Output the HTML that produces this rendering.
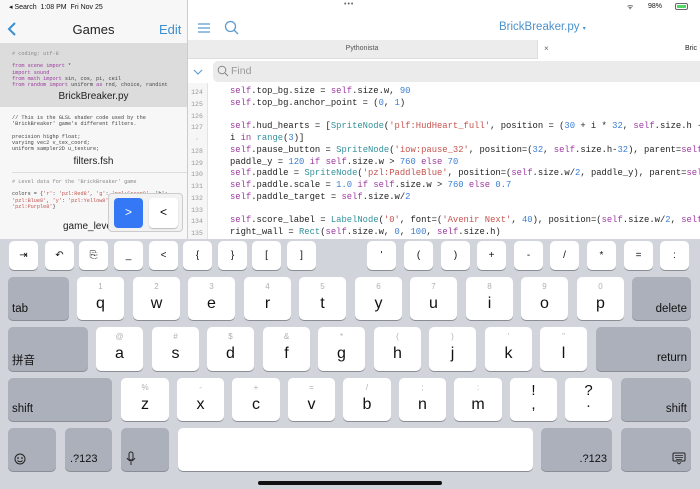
<!DOCTYPE html>
<html><head><meta charset="utf-8"><style>
*{margin:0;padding:0;box-sizing:border-box}
body{width:700px;height:489px;overflow:hidden;background:#fff;font-family:"Liberation Sans",sans-serif;position:relative}
.a{position:absolute}
.sm{font-family:"Liberation Mono",monospace;font-size:5.2px;line-height:6.2px;color:#444;white-space:pre}
.code{font-family:"Liberation Mono",monospace;font-size:8.85px;white-space:pre;color:#222}
.s{color:#9c3aa0}.st{color:#c4544f}.c{color:#33919a}.n{color:#3d7fd3}.k{color:#9c3aa0}
.ln{font-family:"Liberation Mono",monospace;font-size:6.5px;color:#999;width:18px;text-align:center}
.kb{position:absolute;background:#fff;border-radius:5px;box-shadow:0 1px 0 #8a8d93;text-align:center;color:#111}
.g{background:#abb0bb}
.t{height:29px;width:29px;top:241px;font-size:10px;line-height:29px}
.r{height:43px;font-size:16px}
.r span.l{position:absolute;left:0;right:0;top:17px;height:20px;line-height:20px}
.r span.u{position:absolute;left:0;right:0;top:5px;height:10px;line-height:10px;font-size:8px;color:#b0b0b0}
.lab{position:absolute;font-size:11.5px;color:#111}
</style></head><body>
<!-- left pane -->
<div class="a" style="left:0;top:0;width:187px;height:240px;background:#f7f7f7"></div>
<div class="a" style="left:187px;top:0;width:1px;height:240px;background:#ccc"></div>
<!-- status bar -->
<div class="a" style="left:0;top:0;width:700px;height:14px;font-size:7px;color:#111;">
<span class="a" style="left:9px;top:3px;white-space:nowrap">◂ Search&nbsp;&nbsp;1:08 PM&nbsp;&nbsp;Fri Nov 25</span>
<span class="a" style="left:344px;top:1px;color:#666;letter-spacing:1px">•••</span>
<span class="a" style="left:627px;top:3px">ᯤ</span>
<span class="a" style="left:648px;top:3px">98%</span>
<span class="a" style="left:675px;top:3px;width:13px;height:7px;border:1px solid #666;border-radius:2px"><span class="a" style="left:1px;top:1px;width:9px;height:3px;background:#4cd964"></span></span>
</div>
<svg class="a" style="left:6px;top:21px" width="12" height="16"><path d="M9 2 L3 8 L9 14" stroke="#3a8fd0" stroke-width="2" fill="none"/></svg>
<div class="a" style="left:0;width:187px;top:22px;text-align:center;font-size:13px;color:#222">Games</div>
<div class="a" style="left:159px;top:22px;font-size:13px;color:#3a8fd0">Edit</div>
<div class="a" style="left:0;top:43px;width:187px;height:64px;background:#dcdcdc"></div>
<div class="a sm" style="left:12px;top:51px"><span style="color:#888"># coding: utf-8</span>

<span class="k">from scene import</span> *
<span class="k">import sound</span>
<span class="k">from math import</span> sin, cos, pi, ceil
<span class="k">from random import</span> uniform <span class="k">as</span> rnd, choice, randint</div>
<div class="a" style="left:0;width:187px;top:91px;text-align:center;font-size:10px;color:#222">BrickBreaker.py</div>
<div class="a sm" style="left:12px;top:115px">// This is the GLSL shader code used by the
'BrickBreaker' game's different filters.

precision highp float;
varying vec2 v_tex_coord;
uniform sampler2D u_texture;</div>
<div class="a" style="left:0;width:187px;top:156px;text-align:center;font-size:10px;color:#222">filters.fsh</div>
<div class="a" style="left:12px;top:172px;width:175px;height:1px;background:#ddd"></div>
<div class="a sm" style="left:12px;top:179px"><span style="color:#888"># Level data for the 'BrickBreaker' game</span>

colors = {<span class="st">'r'</span>: <span class="st">'pzl:Red8'</span>, <span class="st">'g'</span>: <span class="st">'pzl:Green8'</span>, 'b':
<span class="st">'pzl:Blue8'</span>, <span class="st">'y'</span>: <span class="st">'pzl:Yellow8'</span>
<span class="st">'pzl:Purple8'</span>}</div>
<div class="a" style="left:63px;top:221px;font-size:10px;color:#222">game_level</div>
<div class="a" style="left:108px;top:193px;width:75px;height:39px;background:#f2f2f2;border:1px solid #ccc;border-radius:4px"></div>
<div class="a" style="left:114px;top:198px;width:29px;height:30px;background:#3478f6;border-radius:4px;color:#fff;text-align:center;line-height:29px;font-size:12px">&gt;</div>
<div class="a" style="left:149px;top:198px;width:29px;height:30px;background:#fff;border-radius:4px;box-shadow:0 1px 1px #bbb;text-align:center;line-height:29px;font-size:12px">&lt;</div>
<!-- right pane -->
<svg class="a" style="left:197px;top:22px" width="14" height="12"><path d="M1 2H13M1 6H13M1 10H13" stroke="#5b9bd0" stroke-width="1.2"/></svg>
<svg class="a" style="left:224px;top:20px" width="16" height="16"><circle cx="6.5" cy="6.5" r="5" stroke="#5b9bd0" stroke-width="1.3" fill="none"/><path d="M10 10L14 14" stroke="#5b9bd0" stroke-width="1.3"/></svg>
<div class="a" style="left:499px;top:21px;font-size:11.5px;color:#4b92cc">BrickBreaker.py <span style="font-size:6px">▾</span></div>
<div class="a" style="left:188px;top:40px;width:512px;height:19px;background:#ececec;border-bottom:1px solid #ddd"></div>
<div class="a" style="left:188px;top:45px;width:348px;text-align:center;font-size:7px;color:#555">Pythonista</div>
<div class="a" style="left:537px;top:40px;width:163px;height:19px;background:#fff;border-left:1px solid #ddd"></div>
<div class="a" style="left:544px;top:44px;font-size:8px;color:#666">×</div>
<div class="a" style="left:685px;top:45px;font-size:7px;color:#222">Bric</div>
<svg class="a" style="left:193px;top:68px" width="10" height="8"><path d="M1 2L5 6L9 2" stroke="#5b9bd0" stroke-width="1.1" fill="none"/></svg>
<div class="a" style="left:213px;top:61px;width:487px;height:21px;background:#ebebeb;border-radius:5px 0 0 5px"></div>
<svg class="a" style="left:217px;top:65px" width="12" height="12"><circle cx="5" cy="5" r="3.8" stroke="#888" stroke-width="1" fill="none"/><path d="M8 8L11 11" stroke="#888" stroke-width="1"/></svg>
<div class="a" style="left:231px;top:65px;font-size:10.5px;color:#999">Find</div>
<div class="a" style="left:188px;top:83px;width:20px;height:157px;background:#f6f6f6;border-right:1px solid #e3e3e3"></div>
<div class="a" style="left:188px;top:88px">
<div class="ln" style="position:absolute;top:1px">124</div><div class="ln" style="position:absolute;top:13px">125</div><div class="ln" style="position:absolute;top:25px">126</div><div class="ln" style="position:absolute;top:36px">127</div><div class="ln" style="position:absolute;top:48px">·</div><div class="ln" style="position:absolute;top:60px">128</div><div class="ln" style="position:absolute;top:72px">129</div><div class="ln" style="position:absolute;top:83px">130</div><div class="ln" style="position:absolute;top:95px">131</div><div class="ln" style="position:absolute;top:107px">132</div><div class="ln" style="position:absolute;top:119px">133</div><div class="ln" style="position:absolute;top:130px">134</div><div class="ln" style="position:absolute;top:142px">135</div>
</div>
<div class="a code" style="left:230px;top:86px;line-height:11.75px"><span class="s">self</span>.top_bg.size = <span class="s">self</span>.size.w, <span class="n">90</span>
<span class="s">self</span>.top_bg.anchor_point = (<span class="n">0</span>, <span class="n">1</span>)

<span class="s">self</span>.hud_hearts = [<span class="c">SpriteNode</span>(<span class="st">'plf:HudHeart_full'</span>, position = (<span class="n">30</span> + i * <span class="n">32</span>, <span class="s">self</span>.size.h -
i <span class="k">in</span> <span class="c">range</span>(<span class="n">3</span>)]
<span class="s">self</span>.pause_button = <span class="c">SpriteNode</span>(<span class="st">'iow:pause_32'</span>, position=(<span class="n">32</span>, <span class="s">self</span>.size.h-<span class="n">32</span>), parent=<span class="s">self</span>
paddle_y = <span class="n">120</span> <span class="k">if</span> <span class="s">self</span>.size.w &gt; <span class="n">760</span> <span class="k">else</span> <span class="n">70</span>
<span class="s">self</span>.paddle = <span class="c">SpriteNode</span>(<span class="st">'pzl:PaddleBlue'</span>, position=(<span class="s">self</span>.size.w/<span class="n">2</span>, paddle_y), parent=<span class="s">sel</span>
<span class="s">self</span>.paddle.scale = <span class="n">1.0</span> <span class="k">if</span> <span class="s">self</span>.size.w &gt; <span class="n">760</span> <span class="k">else</span> <span class="n">0.7</span>
<span class="s">self</span>.paddle_target = <span class="s">self</span>.size.w/<span class="n">2</span>

<span class="s">self</span>.score_label = <span class="c">LabelNode</span>(<span class="st">'0'</span>, font=(<span class="st">'Avenir Next'</span>, <span class="n">40</span>), position=(<span class="s">self</span>.size.w/<span class="n">2</span>, <span class="s">self</span>
right_wall = <span class="c">Rect</span>(<span class="s">self</span>.size.w, <span class="n">0</span>, <span class="n">100</span>, <span class="s">self</span>.size.h)</div>
<!-- keyboard -->
<div class="a" style="left:0;top:239px;width:700px;height:250px;background:#d1d4da"></div>
<div class="kb t" style="left:9px">⇥</div><div class="kb t" style="left:45px">↶</div><div class="kb t" style="left:79px">⎘</div><div class="kb t" style="left:114px">_</div><div class="kb t" style="left:149px">&lt;</div><div class="kb t" style="left:183px">{</div><div class="kb t" style="left:218px">}</div><div class="kb t" style="left:252px">[</div><div class="kb t" style="left:287px">]</div>
<div class="kb t" style="left:367px">'</div><div class="kb t" style="left:404px">(</div><div class="kb t" style="left:441px">)</div><div class="kb t" style="left:477px">+</div><div class="kb t" style="left:514px">-</div><div class="kb t" style="left:550px">/</div><div class="kb t" style="left:587px">*</div><div class="kb t" style="left:624px">=</div><div class="kb t" style="left:660px">:</div>
<!-- row1 -->
<div class="kb g" style="left:8px;top:277px;width:61px;height:43px"><span class="lab" style="left:4px;top:26px">tab</span></div>
<div class="kb r" style="left:77px;top:277px;width:47px"><span class="u">1</span><span class="l">q</span></div>
<div class="kb r" style="left:133px;top:277px;width:47px"><span class="u">2</span><span class="l">w</span></div>
<div class="kb r" style="left:188px;top:277px;width:47px"><span class="u">3</span><span class="l">e</span></div>
<div class="kb r" style="left:244px;top:277px;width:47px"><span class="u">4</span><span class="l">r</span></div>
<div class="kb r" style="left:299px;top:277px;width:47px"><span class="u">5</span><span class="l">t</span></div>
<div class="kb r" style="left:355px;top:277px;width:47px"><span class="u">6</span><span class="l">y</span></div>
<div class="kb r" style="left:410px;top:277px;width:47px"><span class="u">7</span><span class="l">u</span></div>
<div class="kb r" style="left:466px;top:277px;width:47px"><span class="u">8</span><span class="l">i</span></div>
<div class="kb r" style="left:521px;top:277px;width:47px"><span class="u">9</span><span class="l">o</span></div>
<div class="kb r" style="left:577px;top:277px;width:47px"><span class="u">0</span><span class="l">p</span></div>
<div class="kb g" style="left:632px;top:277px;width:59px;height:43px"><span class="lab" style="right:4px;top:26px">delete</span></div>
<!-- row2 -->
<div class="kb g" style="left:8px;top:327px;width:80px;height:44px"><span class="lab" style="left:4px;top:25px;font-family:'Liberation Sans','Noto Sans CJK SC',sans-serif">拼音</span></div>
<div class="kb r" style="left:96px;top:327px;width:47px;height:44px"><span class="u">@</span><span class="l">a</span></div>
<div class="kb r" style="left:152px;top:327px;width:47px;height:44px"><span class="u">#</span><span class="l">s</span></div>
<div class="kb r" style="left:207px;top:327px;width:47px;height:44px"><span class="u">$</span><span class="l">d</span></div>
<div class="kb r" style="left:263px;top:327px;width:47px;height:44px"><span class="u">&amp;</span><span class="l">f</span></div>
<div class="kb r" style="left:318px;top:327px;width:47px;height:44px"><span class="u">*</span><span class="l">g</span></div>
<div class="kb r" style="left:374px;top:327px;width:47px;height:44px"><span class="u">(</span><span class="l">h</span></div>
<div class="kb r" style="left:429px;top:327px;width:47px;height:44px"><span class="u">)</span><span class="l">j</span></div>
<div class="kb r" style="left:485px;top:327px;width:47px;height:44px"><span class="u">'</span><span class="l">k</span></div>
<div class="kb r" style="left:540px;top:327px;width:47px;height:44px"><span class="u">"</span><span class="l">l</span></div>
<div class="kb g" style="left:596px;top:327px;width:95px;height:44px"><span class="lab" style="right:4px;top:25px">return</span></div>
<!-- row3 -->
<div class="kb g" style="left:8px;top:378px;width:104px;height:43px"><span class="lab" style="left:4px;top:25px">shift</span></div>
<div class="kb r" style="left:121px;top:378px;width:48px"><span class="u">%</span><span class="l">z</span></div>
<div class="kb r" style="left:177px;top:378px;width:47px"><span class="u">-</span><span class="l">x</span></div>
<div class="kb r" style="left:232px;top:378px;width:48px"><span class="u">+</span><span class="l">c</span></div>
<div class="kb r" style="left:288px;top:378px;width:47px"><span class="u">=</span><span class="l">v</span></div>
<div class="kb r" style="left:343px;top:378px;width:48px"><span class="u">/</span><span class="l">b</span></div>
<div class="kb r" style="left:399px;top:378px;width:47px"><span class="u">;</span><span class="l">n</span></div>
<div class="kb r" style="left:454px;top:378px;width:48px"><span class="u">:</span><span class="l">m</span></div>
<div class="kb r" style="left:510px;top:378px;width:47px;font-size:15px"><span class="l" style="top:3px">!</span><span class="l" style="top:17px">,</span></div>
<div class="kb r" style="left:565px;top:378px;width:47px;font-size:15px"><span class="l" style="top:3px">?</span><span class="l" style="top:15px">.</span></div>
<div class="kb g" style="left:621px;top:378px;width:70px;height:43px"><span class="lab" style="right:4px;top:25px">shift</span></div>
<!-- row4 -->
<div class="kb g" style="left:8px;top:428px;width:48px;height:43px"><svg class="a" style="left:6px;top:25px" width="12" height="12"><circle cx="6" cy="6" r="5" stroke="#222" fill="none"/><circle cx="4" cy="5" r=".8"/><circle cx="8" cy="5" r=".8"/><path d="M3.5 7.5Q6 10 8.5 7.5" stroke="#222" fill="none"/></svg></div>
<div class="kb g" style="left:65px;top:428px;width:47px;height:43px"><span class="lab" style="left:5px;top:25px;font-size:11px">.?123</span></div>
<div class="kb g" style="left:121px;top:428px;width:48px;height:43px"><svg class="a" style="left:5px;top:23px" width="10" height="15"><rect x="3" y="1" width="4" height="8" rx="2" stroke="#222" fill="none"/><path d="M1 7Q5 13 9 7M5 11V14" stroke="#222" fill="none"/></svg></div>
<div class="kb" style="left:178px;top:428px;width:355px;height:43px"></div>
<div class="kb g" style="left:541px;top:428px;width:71px;height:43px"><span class="lab" style="right:5px;top:25px;font-size:11px">.?123</span></div>
<div class="kb g" style="left:621px;top:428px;width:70px;height:43px"><svg class="a" style="right:5px;top:24px;position:absolute" width="14" height="13"><rect x="1" y="1" width="12" height="8" rx="1" stroke="#222" fill="none"/><path d="M3 3.5H11M3 5.5H11M4 7.5H10M5 10.5L7 12L9 10.5" stroke="#222" stroke-width=".8" fill="none"/></svg></div>
<div class="a" style="left:258px;top:481px;width:184px;height:4px;border-radius:2px;background:#111"></div>
</body></html>
